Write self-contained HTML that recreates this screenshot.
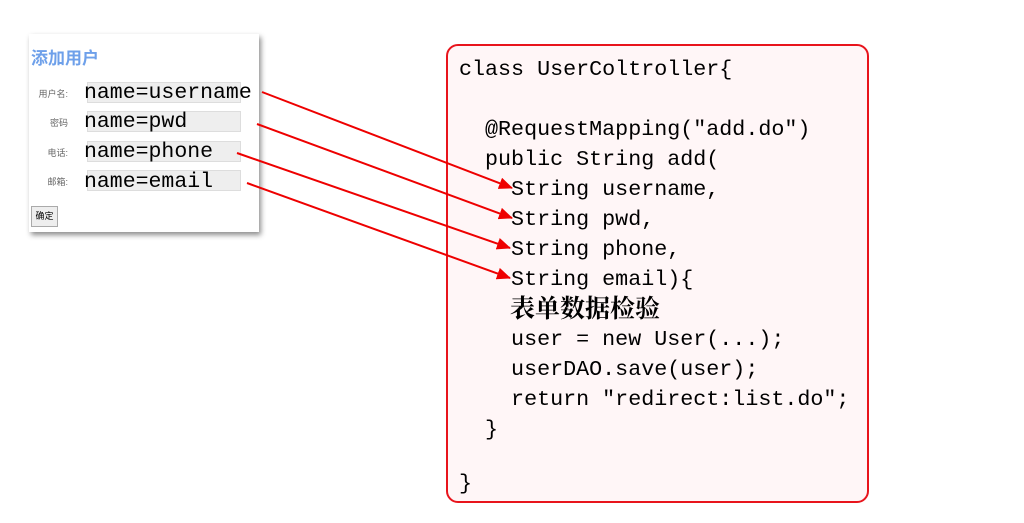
<!DOCTYPE html>
<html><head><meta charset="utf-8"><style>
body{margin:0;width:1024px;height:523px;background:#fff;position:relative;overflow:hidden;font-family:"Liberation Sans","Noto Sans CJK SC",sans-serif}
.panel{position:absolute;left:29px;top:34px;width:230px;height:198px;background:#fff;box-shadow:2px 3px 5px rgba(0,0,0,.45)}
.title{position:absolute;left:2px;top:10px;font-size:17px;font-weight:bold;color:#6ea0ea}
.lbl{position:absolute;font-size:9px;color:#666;text-align:right;width:42px}
.inp{position:absolute;left:58px;width:152px;height:19px;background:#eee;border:1px solid #ddd}
.nm{position:absolute;left:55px;font-family:"Liberation Mono",monospace;font-size:21.5px;color:#000;line-height:24px}
.btn{position:absolute;left:2px;top:172px;width:25px;height:19px;border:1px solid #aaa;background:#eee;font-size:9px;line-height:19px;text-align:center}
.code{position:absolute;left:446px;top:44px;width:419px;height:455px;border:2px solid #e8141c;border-radius:12px;background:#fff6f7}
.l{position:absolute;font-family:"Liberation Mono","Noto Sans CJK SC",monospace;font-size:21.7px;white-space:pre;line-height:30px;color:#000}
.cn{position:absolute;font-family:"Noto Serif CJK SC",serif;font-weight:bold;font-size:25px;line-height:30px;color:#000}
</style></head><body>
<div class="panel">
<div class="title">添加用户</div>
<div class="lbl" style="left:-3px;top:53px">用户名:</div>
<div class="lbl" style="left:-3px;top:82px">密码</div>
<div class="lbl" style="left:-3px;top:112px">电话:</div>
<div class="lbl" style="left:-3px;top:141px">邮箱:</div>
<div class="inp" style="top:48px"></div>
<div class="inp" style="top:77px"></div>
<div class="inp" style="top:107px"></div>
<div class="inp" style="top:136px"></div>
<div class="nm" style="top:47px">name=username</div>
<div class="nm" style="top:76px">name=pwd</div>
<div class="nm" style="top:106px">name=phone</div>
<div class="nm" style="top:136px">name=email</div>
<div class="btn">确定</div>
</div>
<div class="code"></div>
<div class="l" style="left:459px;top:55px">class UserColtroller{</div>
<div class="l" style="left:459px;top:115px">  @RequestMapping("add.do")</div>
<div class="l" style="left:459px;top:145px">  public String add(</div>
<div class="l" style="left:459px;top:175px">    String username,</div>
<div class="l" style="left:459px;top:205px">    String pwd,</div>
<div class="l" style="left:459px;top:235px">    String phone,</div>
<div class="l" style="left:459px;top:265px">    String email){</div>
<div class="cn" style="left:510px;top:292px">表单数据检验</div>
<div class="l" style="left:459px;top:325px">    user = new User(...);</div>
<div class="l" style="left:459px;top:355px">    userDAO.save(user);</div>
<div class="l" style="left:459px;top:385px">    return "redirect:list.do";</div>
<div class="l" style="left:459px;top:415px">  }</div>
<div class="l" style="left:459px;top:469px">}</div>
<svg width="1024" height="523" style="position:absolute;left:0;top:0">
<defs><marker id="a" markerWidth="14" markerHeight="12" refX="13" refY="6" orient="auto" markerUnits="userSpaceOnUse"><path d="M0,0 L14,6 L0,12 z" fill="#e00"/></marker></defs>
<g stroke="#e00" stroke-width="2" marker-end="url(#a)">
<line x1="262" y1="92" x2="512" y2="188"/>
<line x1="257" y1="124" x2="512" y2="218"/>
<line x1="237" y1="153" x2="510" y2="248"/>
<line x1="247" y1="183" x2="510" y2="278"/>
</g></svg>
</body></html>
